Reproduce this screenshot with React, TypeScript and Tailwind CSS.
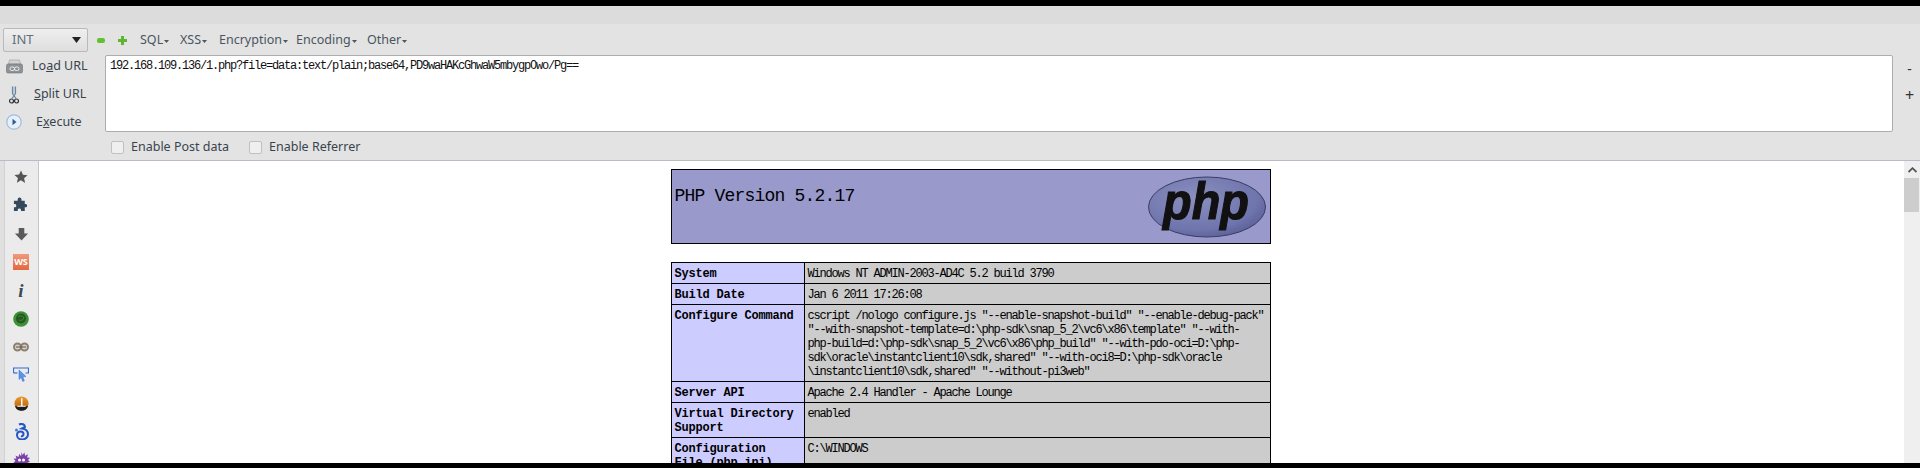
import React from 'react';

const uiFont = { fontFamily: '"Noto Sans", "Open Sans", sans-serif' };

const Caret = () => (
  <svg width="5" height="3" viewBox="0 0 5 3" className="ml-[1px] mt-[3px]">
    <path d="M0 0h5L2.5 3z" fill="#555" />
  </svg>
);

const MenuItem = ({ label, className }: { label: string; className: string }) => (
  <div className={`flex items-center text-[12.5px] text-[#4a5560] ${className}`}>
    {label}
    <Caret />
  </div>
);

const SideIcon = ({ children }: { children: React.ReactNode }) => (
  <div className="h-[28.3px] w-full flex items-center justify-center shrink-0">{children}</div>
);

const Star = () => (
  <svg width="14" height="14" viewBox="0 0 16 16">
    <path d="M8 .5l2.200 5 5.300.5-4 3.500 1.200 5.300L8 11.800l-4.700 2.700 1.200-5.300-4-3.500 5.300-.5z" fill="#555" />
  </svg>
);

const Puzzle = () => (
  <svg width="16" height="16" viewBox="0 0 17 17">
    <path d="M1 4h4V2.500a2 2 0 0 1 4 0V4h3.500v3.500H14a2 2 0 0 1 0 3.500h-1.500V15H8.500v-1.500a1.800 1.800 0 0 0-3.500 0V15H1v-4h1.500a2 2 0 0 0 0-3.500H1z" fill="#34495c" />
  </svg>
);

const DownArrow = () => (
  <svg width="15" height="14" viewBox="0 0 16 15">
    <path d="M5 1h6v6h4l-7 7.500L1 7h4z" fill="#5a5a5a" />
  </svg>
);

const GreenBall = () => (
  <svg width="16" height="16" viewBox="0 0 16 16">
    <circle cx="8" cy="8" r="7.800" fill="#3f8f38" />
    <circle cx="8" cy="7.500" r="5" fill="#235a20" />
    <path d="M5 6c2-2 5-1 6 1-1 2-3 3-5 2" stroke="#4a8f40" strokeWidth="1" fill="none" />
  </svg>
);

const Rings = () => (
  <svg width="16" height="12" viewBox="0 0 16 12">
    <circle cx="4.500" cy="6" r="3.500" fill="#d8d2c8" stroke="#8b8071" strokeWidth="2" />
    <circle cx="11.500" cy="6" r="3.500" fill="#d8d2c8" stroke="#8b8071" strokeWidth="2" />
    <path d="M3 6h10" stroke="#5a5046" strokeWidth="1" />
  </svg>
);

const Inspect = () => (
  <svg width="16" height="16" viewBox="0 0 16 16">
    <path d="M.5 6V1h15v5h-3" fill="none" stroke="#2f6fd8" strokeWidth="1.200" />
    <path d="M.5 6h4" fill="none" stroke="#2f6fd8" strokeWidth="1.200" />
    <path d="M6 3l7 6.500-3.200.3 1.500 4-1.600.6-1.500-4L6 12.500z" fill="#5b93e6" stroke="#2f6fd8" strokeWidth=".5" />
  </svg>
);

const LBall = () => (
  <svg width="15" height="15" viewBox="0 0 16 16">
    <defs>
      <linearGradient id="lball" x1="0" y1="0" x2="0" y2="1">
        <stop offset="0" stopColor="#ee9a2c" />
        <stop offset="1" stopColor="#a85808" />
      </linearGradient>
    </defs>
    <circle cx="8" cy="8" r="7.500" fill="url(#lball)" />
    <path d="M1 11h14a7.500 7.500 0 0 1-14 0z" fill="#1c1c1c" />
    <path d="M7.500 2.500v8H3.500v1h9v-1H9v-8z" fill="#fff" />
  </svg>
);

const Seahorse = () => (
  <svg width="15" height="17" viewBox="0 0 15 17">
    <path d="M5 1.500c3-1.500 6 0 6 2.500L8 5.500c4 .5 6 3 6 6 0 3-3 5-6 5-3 0-5-2-5-4.500 0-2 1.500-3.500 3.500-3.500 1.800 0 3 1 3 2.500S8.500 13.500 7 13" fill="none" stroke="#2257c5" strokeWidth="2" />
    <circle cx="2.500" cy="7" r="1.500" fill="#3a78dd" />
  </svg>
);

const Bug = () => (
  <svg width="17" height="17" viewBox="0 0 17 17">
    <path d="M8.500 0l1 3 2-2.500.5 3.200 3-1.500-1 3.300 3 .2-2 2.300 2 1.800-2.500 1 1 3-3-.5-.5 3-2-2-1 3-1.500-2.800-2 2.300-.5-3-3 1 1-3-2.500-1 2-2-2-2 3-.3-1-3 3 1.500.7-3 2 2.300z" fill="#7b3fa8" />
    <circle cx="6.500" cy="8" r="1.500" fill="#fff" />
    <circle cx="10.500" cy="8" r="1.500" fill="#fff" />
  </svg>
);

const Printer = () => (
  <svg width="17" height="15" viewBox="0 0 17 15">
    <path d="M3.500 1h10l1 4h-12z" fill="#d3d3d3" stroke="#999" strokeWidth=".6" />
    <rect x=".5" y="5" width="16" height="9" rx="1.500" fill="#8e9295" stroke="#6f7275" strokeWidth=".6" />
    <rect x="4" y="8" width="4.500" height="3.500" rx="1.700" fill="none" stroke="#eee" strokeWidth="1" />
    <rect x="8.500" y="8" width="4.500" height="3.500" rx="1.700" fill="none" stroke="#eee" strokeWidth="1" />
  </svg>
);

const Scissors = () => (
  <svg width="10" height="18" viewBox="0 0 10 18">
    <path d="M3.500 0.500v7L7 12.500M6.500 0.500v7L3 12.500" fill="none" stroke="#6d86a0" strokeWidth="1.200" />
    <path d="M5 0.500v7" stroke="#9db3c8" strokeWidth="1" />
    <circle cx="2.500" cy="15" r="2" fill="none" stroke="#333" strokeWidth="1.200" />
    <circle cx="7.500" cy="15" r="2" fill="none" stroke="#333" strokeWidth="1.200" />
  </svg>
);

const ExecuteIcon = () => (
  <svg width="16" height="16" viewBox="0 0 16 16">
    <circle cx="8" cy="8" r="7.200" fill="#e8f1fb" stroke="#9fbde0" strokeWidth="1.200" />
    <path d="M6.500 4.800l4 3.200-4 3.200z" fill="#2f5f9f" />
  </svg>
);

const PhpLogo = () => (
  <svg width="120" height="62" viewBox="0 0 120 62">
    <defs>
      <radialGradient id="phpbg" cx="0.4" cy="0.35" r="0.75">
        <stop offset="0" stopColor="#8b90c0" />
        <stop offset="0.7" stopColor="#6f75ad" />
        <stop offset="1" stopColor="#565b90" />
      </radialGradient>
    </defs>
    <ellipse cx="60" cy="31" rx="58.500" ry="30" fill="url(#phpbg)" stroke="#3a3d63" strokeWidth="1" />
    <text
      x="59"
      y="43"
      textAnchor="middle"
      textLength="86"
      lengthAdjust="spacingAndGlyphs"
      fontSize="52"
      fontStyle="italic"
      fontWeight="700"
      fontFamily="Liberation Sans, sans-serif"
      fill="#111"
      stroke="#111"
      strokeWidth="1.200"
    >
      php
    </text>
  </svg>
);

const rows: { label: React.ReactNode; value: React.ReactNode }[] = [
  { label: 'System', value: 'Windows NT ADMIN-2003-AD4C 5.2 build 3790' },
  { label: 'Build Date', value: 'Jan 6 2011 17:26:08' },
  {
    label: 'Configure Command',
    value: (
      <>
        cscript /nologo configure.js "--enable-snapshot-build" "--enable-debug-pack"
        <br />
        "--with-snapshot-template=d:\php-sdk\snap_5_2\vc6\x86\template" "--with-
        <br />
        php-build=d:\php-sdk\snap_5_2\vc6\x86\php_build" "--with-pdo-oci=D:\php-
        <br />
        sdk\oracle\instantclient10\sdk,shared" "--with-oci8=D:\php-sdk\oracle
        <br />
        \instantclient10\sdk,shared" "--without-pi3web"
      </>
    ),
  },
  { label: 'Server API', value: 'Apache 2.4 Handler - Apache Lounge' },
  {
    label: (
      <>
        Virtual Directory
        <br />
        Support
      </>
    ),
    value: 'enabled',
  },
  {
    label: (
      <>
        Configuration
        <br />
        File (php.ini)
      </>
    ),
    value: 'C:\\WINDOWS',
  },
];

export default function App() {
  return (
    <div className="h-[468px] w-[1920px] flex flex-col overflow-hidden bg-black" style={uiFont}>
      <div className="h-[6px] bg-black shrink-0" />
      <div className="h-[18px] bg-[#dcdcdc] shrink-0" />

      {/* HackBar */}
      <div className="h-[136px] bg-[#e3e3e3] shrink-0 flex flex-col">
        <div className="h-[31px] flex items-center pl-[3px] pt-[1px]">
          <div className="w-[85px] h-[24px] border border-[#b9b9b9] rounded-[2px] bg-gradient-to-b from-[#efefef] to-[#dedede] flex items-center justify-between pl-[8px] pr-[6px] text-[13px] text-[#5f6f7f]">
            INT
            <svg width="9" height="6" viewBox="0 0 9 6">
              <path d="M0 0h9L4.500 6z" fill="#222" />
            </svg>
          </div>
          <div className="w-[8px] h-[5px] rounded-[2px] bg-[#5fc22e] ml-[9px]" />
          <svg width="9" height="9" viewBox="0 0 9 9" className="ml-[13px]">
            <path d="M3 0h3v3h3v3H6v3H3V6H0V3h3z" fill="#5fb52e" />
          </svg>
          <MenuItem label="SQL" className="ml-[13px] w-[40px]" />
          <MenuItem label="XSS" className="w-[39px]" />
          <MenuItem label="Encryption" className="w-[77px]" />
          <MenuItem label="Encoding" className="w-[71px]" />
          <MenuItem label="Other" className="" />
        </div>

        <div className="h-[77px] flex">
          <div className="w-[105px] shrink-0 flex flex-col text-[12.5px] text-[#39434d]">
            <div className="h-[22px] flex items-center pl-[6px]">
              <Printer />
              <span className="ml-[9px]">
                Lo<u>a</u>d URL
              </span>
            </div>
            <div className="h-[35px] flex items-center pl-[9px]">
              <Scissors />
              <span className="ml-[15px]">
                <u>S</u>plit URL
              </span>
            </div>
            <div className="h-[20px] flex items-center pl-[6px]">
              <ExecuteIcon />
              <span className="ml-[14px]">
                E<u>x</u>ecute
              </span>
            </div>
          </div>
          <div
            className="w-[788px] grow bg-white border border-[#adadad] rounded-[2px] pl-[4px] pt-[2px] text-[12px] leading-[16px] tracking-[-1.2px] text-[#111]"
            style={{ fontFamily: '"Liberation Mono", monospace' }}
          >
            192.168.109.136/1.php?file=data:text/plain;base64,PD9waHAKcGhwaW5mbygpOwo/Pg==
          </div>
          <div className="w-[27px] shrink-0 flex flex-col items-center pl-[6px] text-[#333] text-[14px]">
            <div className="h-[26px] flex items-center">-</div>
            <div className="h-[27px] flex items-center text-[16px]">+</div>
          </div>
        </div>

        <div className="h-[28px] flex items-center pl-[111px] pt-[3px] text-[12.5px] text-[#39434d]">
          <div className="w-[13px] h-[13px] bg-[#efefef] border border-[#c0c0c0] rounded-[2px]" />
          <span className="ml-[7px] w-[118px]">Enable Post data</span>
          <div className="w-[13px] h-[13px] bg-[#efefef] border border-[#c0c0c0] rounded-[2px]" />
          <span className="ml-[7px]">Enable Referrer</span>
        </div>
      </div>

      {/* Browser area */}
      <div className="h-[303px] shrink-0 border-t border-[#b8bcc4] flex overflow-hidden bg-white">
        <div className="w-[39px] shrink-0 flex bg-[#ebebeb] border-r border-[#c6c6c6]">
          <div className="w-[5px] shrink-0 bg-[#e0e0e0] border-r border-[#d2d2d2]" />
          <div className="grow flex flex-col items-center pt-[2px] pr-[1px]">
            <SideIcon><Star /></SideIcon>
            <SideIcon><Puzzle /></SideIcon>
            <SideIcon><DownArrow /></SideIcon>
            <SideIcon>
              <div className="w-[16px] h-[16px] bg-gradient-to-b from-[#ef9a7a] to-[#e2683e] text-white text-[9px] font-bold flex items-center justify-center">
                WS
              </div>
            </SideIcon>
            <SideIcon>
              <span
                className="text-[19px] leading-none font-bold italic text-[#3c4a55]"
                style={{ fontFamily: '"Liberation Serif", serif' }}
              >
                i
              </span>
            </SideIcon>
            <SideIcon><GreenBall /></SideIcon>
            <SideIcon><Rings /></SideIcon>
            <SideIcon><Inspect /></SideIcon>
            <SideIcon><LBall /></SideIcon>
            <SideIcon><Seahorse /></SideIcon>
            <SideIcon><Bug /></SideIcon>
          </div>
        </div>

        {/* phpinfo page */}
        <div
          className="grow flex flex-col items-center pt-[8px] pr-[2px] text-black"
          style={{ fontFamily: '"Liberation Mono", monospace' }}
        >
          <div className="w-[600px] h-[75px] shrink-0 bg-[#9999cc] border border-black flex justify-between pl-[3px] pr-[3px] pt-[6px]">
            <h1 className="text-[18px] leading-[26px] tracking-[-0.8px] pt-[7px]">PHP Version 5.2.17</h1>
            <PhpLogo />
          </div>
          <table className="w-[600px] mt-[18px] border-collapse text-[12px] leading-[14px] shrink-0">
            <tbody>
              {rows.map((row, i) => (
                <tr key={i}>
                  <td className="w-[133px] align-top border border-black bg-[#ccccff] px-[3px] pt-[4px] pb-[2px] font-bold tracking-[-0.2px]">
                    {row.label}
                  </td>
                  <td className="align-top border border-black bg-[#cccccc] px-[3px] pt-[4px] pb-[2px] tracking-[-1.2px] whitespace-nowrap">
                    {row.value}
                  </td>
                </tr>
              ))}
            </tbody>
          </table>
        </div>

        {/* scrollbar */}
        <div className="w-[16px] shrink-0 bg-[#efefef] flex flex-col">
          <div className="h-[17px] flex items-center justify-center">
            <svg width="9" height="6" viewBox="0 0 9 6">
              <path d="M.5 5L4.500 1.200 8.500 5" fill="none" stroke="#555" strokeWidth="1.800" />
            </svg>
          </div>
          <div className="h-[34px] w-[15px] bg-[#cdcdcd]" />
        </div>
      </div>

      <div className="grow bg-black" />
    </div>
  );
}
